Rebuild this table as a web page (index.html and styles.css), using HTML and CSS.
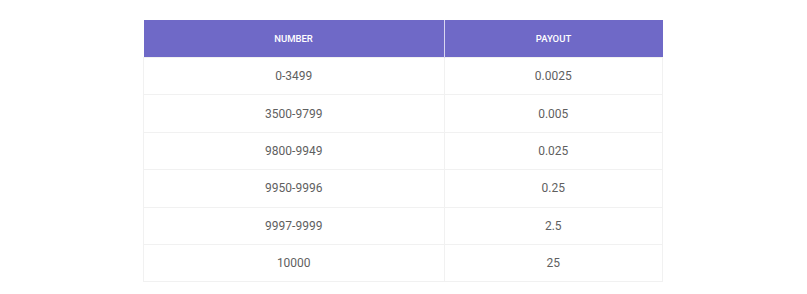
FILE: index.html
```html
<!DOCTYPE html>
<html lang="en">

<head>
    <meta charset="UTF-8">
    <meta name="viewport" content="width=device-width, initial-scale=1.0">
    <title>Payout table</title>
    <link rel="stylesheet" href="styles.css">
</head>

<body>
    <div class="container">
        <table class="payout-table">
            <thead>
                <tr>
                    <th class="col-number">Number</th>
                    <th class="col-payout">Payout</th>
                </tr>
            </thead>
            <tbody>
                <tr><td>0-3499</td><td>0.0025</td></tr>
                <tr><td>3500-9799</td><td>0.005</td></tr>
                <tr><td>9800-9949</td><td>0.025</td></tr>
                <tr><td>9950-9996</td><td>0.25</td></tr>
                <tr><td>9997-9999</td><td>2.5</td></tr>
                <tr><td>10000</td><td>25</td></tr>
            </tbody>
        </table>
    </div>
</body>

</html>
```

FILE: styles.css
```css
body {
    font-family: Roboto, 'Liberation Sans', sans-serif;
    background-color: #fff;
    margin: 0;
    padding: 0;
}

.container {
    display: flex;
    justify-content: center;
    padding-top: 20px;
}

.payout-table {
    width: 520px;
    border-collapse: collapse;
    table-layout: fixed;
    margin-right: 1px;
}

.payout-table th {
    height: 37px;
    padding: 0;
    background-color: #6f69c7;
    color: #fff;
    font-size: 9.5px;
    font-weight: 500;
    text-transform: uppercase;
    text-align: center;
    border-left: 1px solid #d9d7f1;
}

.payout-table th:first-child {
    border-left: none;
}

.col-number {
    width: 300px;
}

.payout-table td {
    height: 36.4px;
    padding: 0;
    text-align: center;
    font-size: 12px;
    color: #5f5f5f;
    border: 1px solid #f1f1f1;
}
```
